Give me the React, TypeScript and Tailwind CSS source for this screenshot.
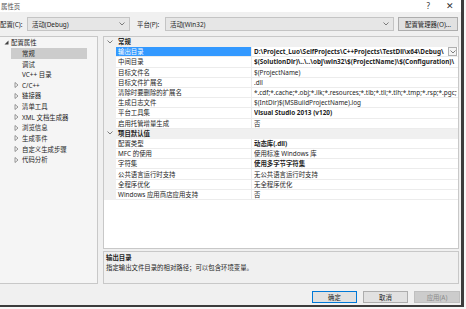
import React from "react";

const Chevron = ({ className = "" }: { className?: string }) => (
  <svg width="6" height="4" viewBox="0 0 6 4" className={className}>
    <path d="M0.5 0.5 L3 3 L5.5 0.5" fill="none" stroke="#606060" strokeWidth="0.8" />
  </svg>
);

const Expanded = () => (
  <svg width="5" height="5" viewBox="0 0 5 5">
    <path d="M4.5 0.5 L4.5 4.5 L0.5 4.5 Z" fill="#404040" />
  </svg>
);

const Collapsed = () => (
  <svg width="5" height="6" viewBox="0 0 5 6">
    <path d="M1 0.5 L4 3 L1 5.5 Z" fill="none" stroke="#707070" strokeWidth="0.7" />
  </svg>
);

type Row = { name: string; value: string; bold?: boolean; selected?: boolean };

const general: Row[] = [
  { name: "输出目录", value: "D:\\Project_Luo\\SelfProjects\\C++Projects\\TestDll\\x64\\Debug\\", bold: true, selected: true },
  { name: "中间目录", value: "$(SolutionDir)\\..\\..\\obj\\win32\\$(ProjectName)\\$(Configuration)\\", bold: true },
  { name: "目标文件名", value: "$(ProjectName)" },
  { name: "目标文件扩展名", value: ".dll" },
  { name: "清除时要删除的扩展名", value: "*.cdf;*.cache;*.obj;*.ilk;*.resources;*.tlb;*.tli;*.tlh;*.tmp;*.rsp;*.pgc;*.pgd;*.meta;*.tlog;*.manifest" },
  { name: "生成日志文件", value: "$(IntDir)$(MSBuildProjectName).log" },
  { name: "平台工具集", value: "Visual Studio 2013 (v120)", bold: true },
  { name: "启用托管增量生成", value: "否" },
];

const defaults: Row[] = [
  { name: "配置类型", value: "动态库(.dll)", bold: true },
  { name: "MFC 的使用", value: "使用标准 Windows 库" },
  { name: "字符集", value: "使用多字节字符集", bold: true },
  { name: "公共语言运行时支持", value: "无公共语言运行时支持" },
  { name: "全程序优化", value: "无全程序优化" },
  { name: "Windows 应用商店应用支持", value: "否" },
];

const tree: { label: string; level: number; kind: "exp" | "col" | "none"; selected?: boolean }[] = [
  { label: "配置属性", level: 0, kind: "exp" },
  { label: "常规", level: 1, kind: "none", selected: true },
  { label: "调试", level: 1, kind: "none" },
  { label: "VC++ 目录", level: 1, kind: "none" },
  { label: "C/C++", level: 1, kind: "col" },
  { label: "链接器", level: 1, kind: "col" },
  { label: "清单工具", level: 1, kind: "col" },
  { label: "XML 文档生成器", level: 1, kind: "col" },
  { label: "浏览信息", level: 1, kind: "col" },
  { label: "生成事件", level: 1, kind: "col" },
  { label: "自定义生成步骤", level: 1, kind: "col" },
  { label: "代码分析", level: 1, kind: "col" },
];

const CategoryRow = ({ label }: { label: string }) => (
  <div className="flex h-[10.2px] items-center bg-[#f0f0f0] border-b border-[#f0f0f0]">
    <div className="w-[12px] flex justify-center">
      <Chevron />
    </div>
    <span className="font-bold text-[#1e1e1e] ml-[2px] leading-[9px]">{label}</span>
  </div>
);

const PropRow = ({ r }: { r: Row }) => (
  <div className="flex h-[10.2px] items-stretch">
    <div className="w-[12px] shrink-0 bg-[#f0f0f0]" />
    <div
      className={
        "w-[136px] shrink-0 flex items-center pl-[2px] border-b border-r border-[#ececec] " +
        (r.selected ? "bg-[#3399ff] text-white" : "text-[#1e1e1e]")
      }
    >
      <span className="whitespace-nowrap leading-[9px]">{r.name}</span>
    </div>
    <div className="flex-1 min-w-0 flex items-center border-b border-[#ececec] pl-[2px] pr-[1px] overflow-hidden">
      <span className={"flex-1 whitespace-nowrap overflow-hidden leading-[9px] text-[#1e1e1e] " + (r.bold ? "font-bold" : "")}>
        {r.value}
      </span>
      {r.selected && (
        <div className="w-[9px] h-[9px] shrink-0 border border-[#b0b0b0] bg-[#f4f4f4] flex items-center justify-center">
          <Chevron />
        </div>
      )}
    </div>
  </div>
);

export default function App() {
  return (
    <div className="w-[466px] h-[309px] bg-[#f7f7f7] overflow-hidden font-['Noto_Sans','Noto_Sans_CJK_SC',sans-serif] text-[6.4px] leading-[9px] text-[#1e1e1e]">
      <div className="w-[464px] h-[307px] bg-[#f0f0f0] border-r-[3px] border-b-[2px] border-[#3c3c3c] flex flex-col">
        {/* title bar */}
        <div className="h-[12px] w-full shrink-0 bg-white flex flex-row items-center">
          <span className="ml-[1px] text-[#505050] whitespace-nowrap">属性页</span>
          <div className="flex-1" />
          <span className="text-[8px] leading-[10px] text-[#303030]">?</span>
          <span className="ml-[16px] mr-[7px] text-[9px] leading-[10px] text-[#303030]">✕</span>
        </div>
        {/* toolbar */}
        <div className="h-[23px] flex items-center pt-[1px]">
          <span className="w-[27px] shrink-0 whitespace-nowrap">配置(C):</span>
          <div className="w-[103px] h-[14px] border border-[#c4c4c4] bg-[#e6e6e6] flex items-center px-[4px]">
            <span className="flex-1">活动(Debug)</span>
            <Chevron />
          </div>
          <span className="ml-[7px] w-[28px] whitespace-nowrap">平台(P):</span>
          <div className="w-[229px] h-[14px] border border-[#c4c4c4] bg-[#e6e6e6] flex items-center px-[4px]">
            <span className="flex-1">活动(Win32)</span>
            <Chevron />
          </div>
          <div className="ml-[4px] w-[60px] h-[14px] border border-[#adadad] bg-[#e1e1e1] flex items-center justify-center whitespace-nowrap">
            配置管理器(O)...
          </div>
        </div>
        {/* main */}
        <div className="flex h-[249px] mt-[1px]">
          {/* tree */}
          <div className="w-[98px] h-[248px] border border-l-0 border-[#c8c8c8] bg-[#f5f5f5] pt-[0.5px]">
            {tree.map((t, i) => (
              <div key={i} className="h-[10.64px] flex items-center">
                {t.level === 0 ? (
                  <div className="flex items-center">
                    <div className="w-[11px] flex justify-center pl-[1px]">
                      <Expanded />
                    </div>
                    <span>{t.label}</span>
                  </div>
                ) : (
                  <div
                    className={
                      "flex items-center h-full ml-[11px] w-[76px] " + (t.selected ? "bg-[#cccccc]" : "")
                    }
                  >
                    <div className="w-[11px] flex justify-center">{t.kind === "col" && <Collapsed />}</div>
                    <span className="whitespace-nowrap">{t.label}</span>
                  </div>
                )}
              </div>
            ))}
          </div>
          {/* right */}
          <div className="ml-[5px] w-[356px] flex flex-col">
            <div className="h-[213px] border border-[#c8c8c8] bg-white overflow-hidden">
              <CategoryRow label="常规" />
              {general.map((r, i) => (
                <PropRow key={i} r={r} />
              ))}
              <CategoryRow label="项目默认值" />
              {defaults.map((r, i) => (
                <PropRow key={i} r={r} />
              ))}
            </div>
            <div className="mt-[2px] h-[33px] border border-[#c8c8c8] bg-[#f0f0f0] px-[2px] pt-[1px] flex flex-col gap-[1px]">
              <span className="font-bold">输出目录</span>
              <span>指定输出文件目录的相对路径；可以包含环境变量。</span>
            </div>
          </div>
        </div>
        {/* buttons */}
        <div className="flex justify-end gap-[6px] mt-[6px] pr-[1px]">
          <div className="w-[45px] h-[12px] border border-[#0078d7] bg-[#e1e1e1] flex items-center justify-center">确定</div>
          <div className="w-[45px] h-[12px] border border-[#adadad] bg-[#e1e1e1] flex items-center justify-center">取消</div>
          <div className="w-[46px] h-[12px] border border-[#bfbfbf] bg-[#cccccc] text-[#8a8a8a] flex items-center justify-center">应用(A)</div>
        </div>
      </div>
    </div>
  );
}
